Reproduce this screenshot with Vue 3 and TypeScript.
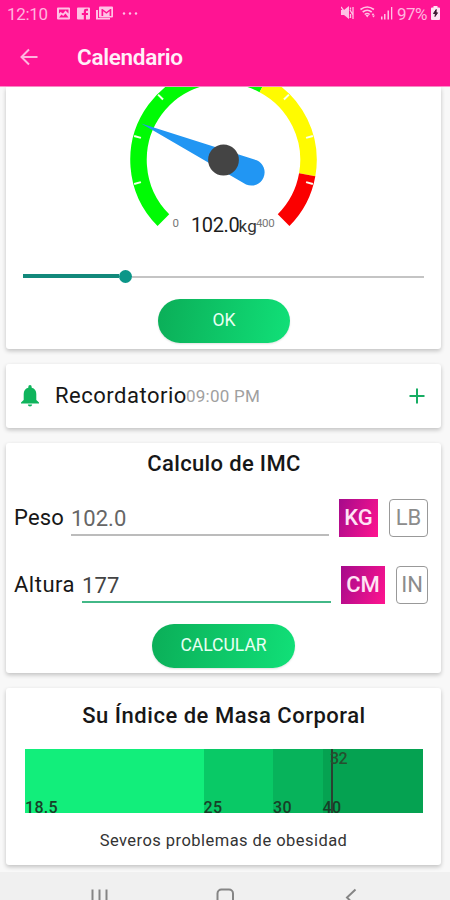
<script setup lang="ts">
import { computed, ref } from 'vue'

interface Zone { from: number; to: number; color: string }
interface Band { label: string; width: number; color: string }
interface Field { label: string; value: string; units: [string, string]; focused: boolean; key: string }

const weight = ref(102)
const maxWeight = 400
const cx = 223.5
const cy = 73

const zones: Zone[] = [
  { from: -135, to: 28, color: '#00fb04' },
  { from: 28, to: 100, color: '#fffb00' },
  { from: 100, to: 135, color: '#fb0000' },
]
const ticks = [-105, -75, -45, 45, 75, 105]

function point(angle: number, r: number): string {
  const a = (angle * Math.PI) / 180
  return `${(cx + r * Math.sin(a)).toFixed(2)} ${(cy - r * Math.cos(a)).toFixed(2)}`
}
function arc(z: Zone): string {
  const r = 85
  return `M${point(z.from, r)}A${r} ${r} 0 ${z.to - z.from > 180 ? 1 : 0} 1 ${point(z.to, r)}`
}
const needle = computed(() => `rotate(${-135 + (weight.value / maxWeight) * 270} ${cx} ${cy})`)

const fields: Field[] = [
  { label: 'Peso', value: '102.0', units: ['KG', 'LB'], focused: false, key: 'peso' },
  { label: 'Altura', value: '177', units: ['CM', 'IN'], focused: true, key: 'altura' },
]
const bands: Band[] = [
  { label: '18.5', width: 178.5, color: '#12ee7b' },
  { label: '25', width: 69.5, color: '#09c966' },
  { label: '30', width: 49.5, color: '#07b35b' },
  { label: '40', width: 100, color: '#05a251' },
]
</script>

<template>
  <div class="screen">
    <header class="header">
      <div class="status">
        <span class="clock">12:10</span>
        <svg class="left-icons" width="84" height="16" viewBox="0 0 84 16">
          <g fill="#ffc2e5">
            <path fill-rule="evenodd" d="M2 1.500h11q1 0 1 1v10q0 1-1 1H2q-1 0-1-1v-10q0-1 1-1zM3 11.500h9.500L9.500 7.500 7.200 10 5.500 8.500zM3 3.500v4l1.500-1.500L7 7.500l2.500-3 3 3v-4z" />
            <path fill-rule="evenodd" d="M22 1.500h11q1 0 1 1v10q0 1-1 1h-3V9h2V7h-2V5.500q0-.8.800-.8H32v-2h-2q-2.200 0-2.200 2.300v2h-2v2h2v4.500H22q-1 0-1-1v-10q0-1 1-1z" />
            <path d="M40 4v9.500h14V12H42V4z" />
            <path fill-rule="evenodd" d="M44 .5h12q1 0 1 1v9q0 1-1 1H44q-1 0-1-1v-9q0-1 1-1zM45.500 3v7h1.700V5.300l3.200 2.500 3.200-2.500V10h1.700V3h-1l-3.900 3-3.900-3z" />
            <circle cx="68" cy="7.500" r="1.200" /><circle cx="74" cy="7.500" r="1.200" /><circle cx="80" cy="7.500" r="1.200" />
          </g>
        </svg>
        <span class="grow"></span>
        <svg class="right-icons" width="54" height="16" viewBox="0 0 54 16">
          <g fill="#ffc2e5">
            <path d="M0 5h3l5-4v13l-5-4H0z" />
            <path d="M0 2l8 11M9 5l3 5M12 2v12M9.500 2.500v2M9.500 9v4" fill="none" stroke="#ffc2e5" stroke-width="1.300" />
            <path d="M19.500 4.500q6.700-5 13.400 0M21.700 7q4.500-3.500 9 0M23.700 9.500q2.500-2 5 0" fill="none" stroke="#ffc2e5" stroke-width="1.600" />
            <path d="M24.500 10h3.500l-1.800 2.500zM32 8l1.300 2h-2.600zM32.500 12.500l1.500-2h-3z" />
            <path d="M40 11.500h1.500v3H40zM43 9h1.500v5.500H43zM46.500 5.500H48v9h-1.500zM50 2h1.300v12.500H50z" />
          </g>
        </svg>
        <span class="percent">97%</span>
        <svg class="battery" width="9" height="14" viewBox="0 0 9 14">
          <path d="M2.500 0h4v1.500H8q1 0 1 1V13q0 1-1 1H1q-1 0-1-1V2.500q0-1 1-1h1.500z" fill="#ffe3f3" />
          <path d="M5.200 3.500L2.500 7.500h2l-.5 3L6.500 6.800H5z" fill="#3b1630" stroke="#3b1630" />
        </svg>
      </div>
      <div class="bar">
        <svg class="back" width="20" height="20" viewBox="0 0 20 20">
          <path d="M18.500 10H3M10 2.500L2.500 10l7.500 7.500" fill="none" stroke="#ffb5df" stroke-width="2" />
        </svg>
        <h1 class="title">Calendario</h1>
      </div>
    </header>

    <main class="content">
      <section class="card weight">
        <svg class="gauge" width="450" height="160" viewBox="0 0 450 160">
          <path v-for="z in zones" :key="z.color" :d="arc(z)" fill="none" :stroke="z.color" stroke-width="16.500" />
          <path v-for="t in ticks" :key="t" :d="`M${point(t, 85.5)}L${point(t, 92.500)}`" stroke="#f8fff0" stroke-width="2" />
          <g :transform="needle">
            <path d="M223.500 -17L236.700 103.500A13.200 13.200 0 0 1 210.300 103.500z" fill="#2196f3" />
          </g>
          <circle :cx="cx" :cy="cy" r="15.400" fill="#444" />
          <text class="g-edge" x="172.500" y="139.500">0</text>
          <text class="g-value" x="191" y="145">102.0</text>
          <text class="g-unit" x="238.500" y="145">kg</text>
          <text class="g-edge" x="256" y="139.500">400</text>
        </svg>
        <div class="slider">
          <span class="slider-fill"></span>
          <span class="slider-thumb"></span>
          <span class="slider-rest"></span>
        </div>
        <button class="pill ok">OK</button>
      </section>

      <section class="card reminder">
        <svg class="bell" width="18" height="22" viewBox="0 0 18 22">
          <path d="M9 0q1.700 0 1.700 2v.8Q15.300 4 15.300 9v6L18 17.500V18.500H0V17.500L2.700 15V9Q2.700 4 7.300 2.800V2Q7.300 0 9 0zM6.800 19.500h4.400Q11 21.500 9 21.500T6.800 19.500z" fill="#0fb45c" />
        </svg>
        <span class="reminder-name">Recordatorio</span>
        <span class="reminder-time">09:00 PM</span>
        <span class="grow"></span>
        <svg class="plus" width="16" height="16" viewBox="0 0 16 16">
          <path d="M8 .5v15M.5 8h15" stroke="#17ad63" stroke-width="2" />
        </svg>
      </section>

      <section class="card calc">
        <h2 class="heading calc-title">Calculo de IMC</h2>
        <div v-for="f in fields" :key="f.key" class="field" :class="f.key">
          <label class="label">{{ f.label }}</label>
          <div class="input" :class="{ focused: f.focused }">{{ f.value }}</div>
          <button class="unit on">{{ f.units[0] }}</button>
          <button class="unit off">{{ f.units[1] }}</button>
        </div>
        <button class="pill calculate">CALCULAR</button>
      </section>

      <section class="card result">
        <h2 class="heading result-title">Su Índice de Masa Corporal</h2>
        <div class="scale">
          <div v-for="b in bands" :key="b.label" class="band" :style="{ width: b.width + 'px', background: b.color }">
            {{ b.label }}
          </div>
          <span class="marker"></span>
          <span class="marker-label">32</span>
        </div>
        <p class="verdict">Severos problemas de obesidad</p>
      </section>
    </main>

    <nav class="nav">
      <svg width="450" height="28" viewBox="0 0 450 28" fill="none" stroke="#858585" stroke-width="2">
        <path d="M92.500 17.500v14M99.500 17.500v14M106.500 17.500v14" />
        <rect x="217.500" y="17.500" width="15.500" height="15" rx="4" />
        <path d="M355.500 17.500L347 25.500 355.500 34" />
      </svg>
    </nav>
  </div>
</template>

<style>
body { margin: 0; overflow: hidden; }
</style>

<style scoped>
* { box-sizing: border-box; }
.screen { width: 450px; height: 900px; display: flex; flex-direction: column; overflow: hidden; background: #f8f8f8; font-family: Roboto, "Liberation Sans", sans-serif; color: #171717; }
.header { height: 87px; flex: none; background: #ff1493; border-bottom: 1px solid #ff8dca; }
.status { display: flex; align-items: center; height: 28px; padding: 0 10px 0 7px; color: #ffb5df; font-size: 17px; }
.clock { width: 49px; letter-spacing: -.3px; margin-top: -1px; }
.left-icons { margin-top: -1px; }
.grow { flex: 1; }
.right-icons { margin-right: 2px; margin-top: -2px; }
.percent { width: 33px; letter-spacing: -.5px; margin-top: -1px; }
.battery { margin-top: -2px; margin-left: 1px; }
.bar { height: 58px; display: flex; align-items: center; padding-left: 19px; }
.title { margin: 0 0 0 38px; font-size: 22.500px; font-weight: 600; color: #fff0f8; letter-spacing: -.3px; }
.content { flex: none; height: 785px; display: flex; flex-direction: column; padding: 0 9px 0 6px; }
.card { flex: none; background: #fff; border-radius: 3px; box-shadow: 0 2px 4px rgba(0,0,0,.22); }
.weight { height: 262px; display: flex; flex-direction: column; align-items: flex-start; overflow: hidden; border-radius: 0 0 3px 3px; }
.gauge { margin-left: -6px; flex: none; }
.g-edge { font-size: 11.500px; fill: #777; letter-spacing: -.4px; }
.g-value { font-size: 20px; fill: #1c1c1c; letter-spacing: -.4px; }
.g-unit { font-size: 17px; fill: #333; letter-spacing: .2px; }
.slider { height: 14px; margin: 22px 17px 0; width: 401px; display: flex; align-items: center; }
.slider-fill { width: 96px; height: 4px; background: #12897b; }
.slider-thumb { width: 13px; height: 13px; border-radius: 50%; background: #0b9688; }
.slider-rest { flex: 1; height: 2px; margin-top: 2px; background: #c4c4c4; }
.pill { border: 0; padding: 0 0 2px; height: 44px; border-radius: 22px; background: linear-gradient(100deg, #0bae58, #11e078); color: #e9fff3; font-family: inherit; font-weight: 400; font-size: 17.500px; box-shadow: 0 1px 2px rgba(0,0,0,.12); }
.ok { width: 132px; margin: 16px 0 0 152px; }
.reminder { height: 64px; margin-top: 15px; display: flex; align-items: center; padding: 0 16px 0 15px; }
.reminder-name { width: 132px; margin-left: 16px; margin-top: -2px; font-size: 22px; letter-spacing: .5px; white-space: nowrap; }
.reminder-time { font-size: 17px; color: #a0a0a0; letter-spacing: .25px; margin-left: -1px; }
.heading { margin: 0; text-align: center; font-size: 22px; font-weight: 500; line-height: 26px; }
.calc { height: 230px; margin-top: 15px; padding-top: 8px; }
.calc-title { letter-spacing: .35px; padding-left: 1px; }
.field { display: flex; align-items: flex-start; padding: 0 13px 0 8px; height: 39px; }
.peso { margin-top: 22px; }
.altura { margin-top: 28px; }
.label { line-height: 37px; font-size: 22px; }
.peso .label { width: 57px; letter-spacing: .2px; }
.altura .label { width: 68px; letter-spacing: .5px; }
.input { flex: 1; height: 37px; line-height: 39px; border-bottom: 2px solid #bcbcbc; font-size: 22px; color: #666; }
.input.focused { border-color: #42b887; color: #444; letter-spacing: .1px; }
.unit { height: 38px; padding: 0 0 2px; font-family: inherit; font-size: 22px; }
.on { border: 0; background: linear-gradient(110deg, #a50a8b, #ff148f); color: #ffe3f5; font-weight: 500; margin-left: 10px; }
.off { border: 1px solid #999; border-radius: 4px; background: #fff; color: #8c8c8c; margin-left: 11px; }
.peso .on { width: 39px; }
.peso .off { width: 39px; }
.altura .on { width: 44px; }
.altura .off { width: 32px; }
.calculate { display: block; width: 143px; margin: 19px 0 0 146px; }
.result { height: 177px; margin-top: 15px; padding-top: 15px; }
.result-title { letter-spacing: .52px; padding-left: 1px; }
.scale { position: relative; display: flex; width: 397.500px; height: 64px; margin: 20px 0 0 19px; }
.band { display: flex; align-items: flex-end; line-height: 11px; font-size: 16px; font-weight: 500; color: #173f28; letter-spacing: .3px; }
.marker { position: absolute; left: 306px; top: 0; width: 2px; height: 64px; background: #2a4031; }
.marker-label { position: absolute; left: 305px; top: 1px; font-size: 16px; font-weight: 500; color: #24502f; line-height: 18px; letter-spacing: -.5px; }
.verdict { margin: 18px 0 0; text-align: center; font-size: 16.500px; line-height: 20px; letter-spacing: .46px; color: #333; }
.nav { height: 28px; flex: none; background: #f0f0f0; }
</style>
